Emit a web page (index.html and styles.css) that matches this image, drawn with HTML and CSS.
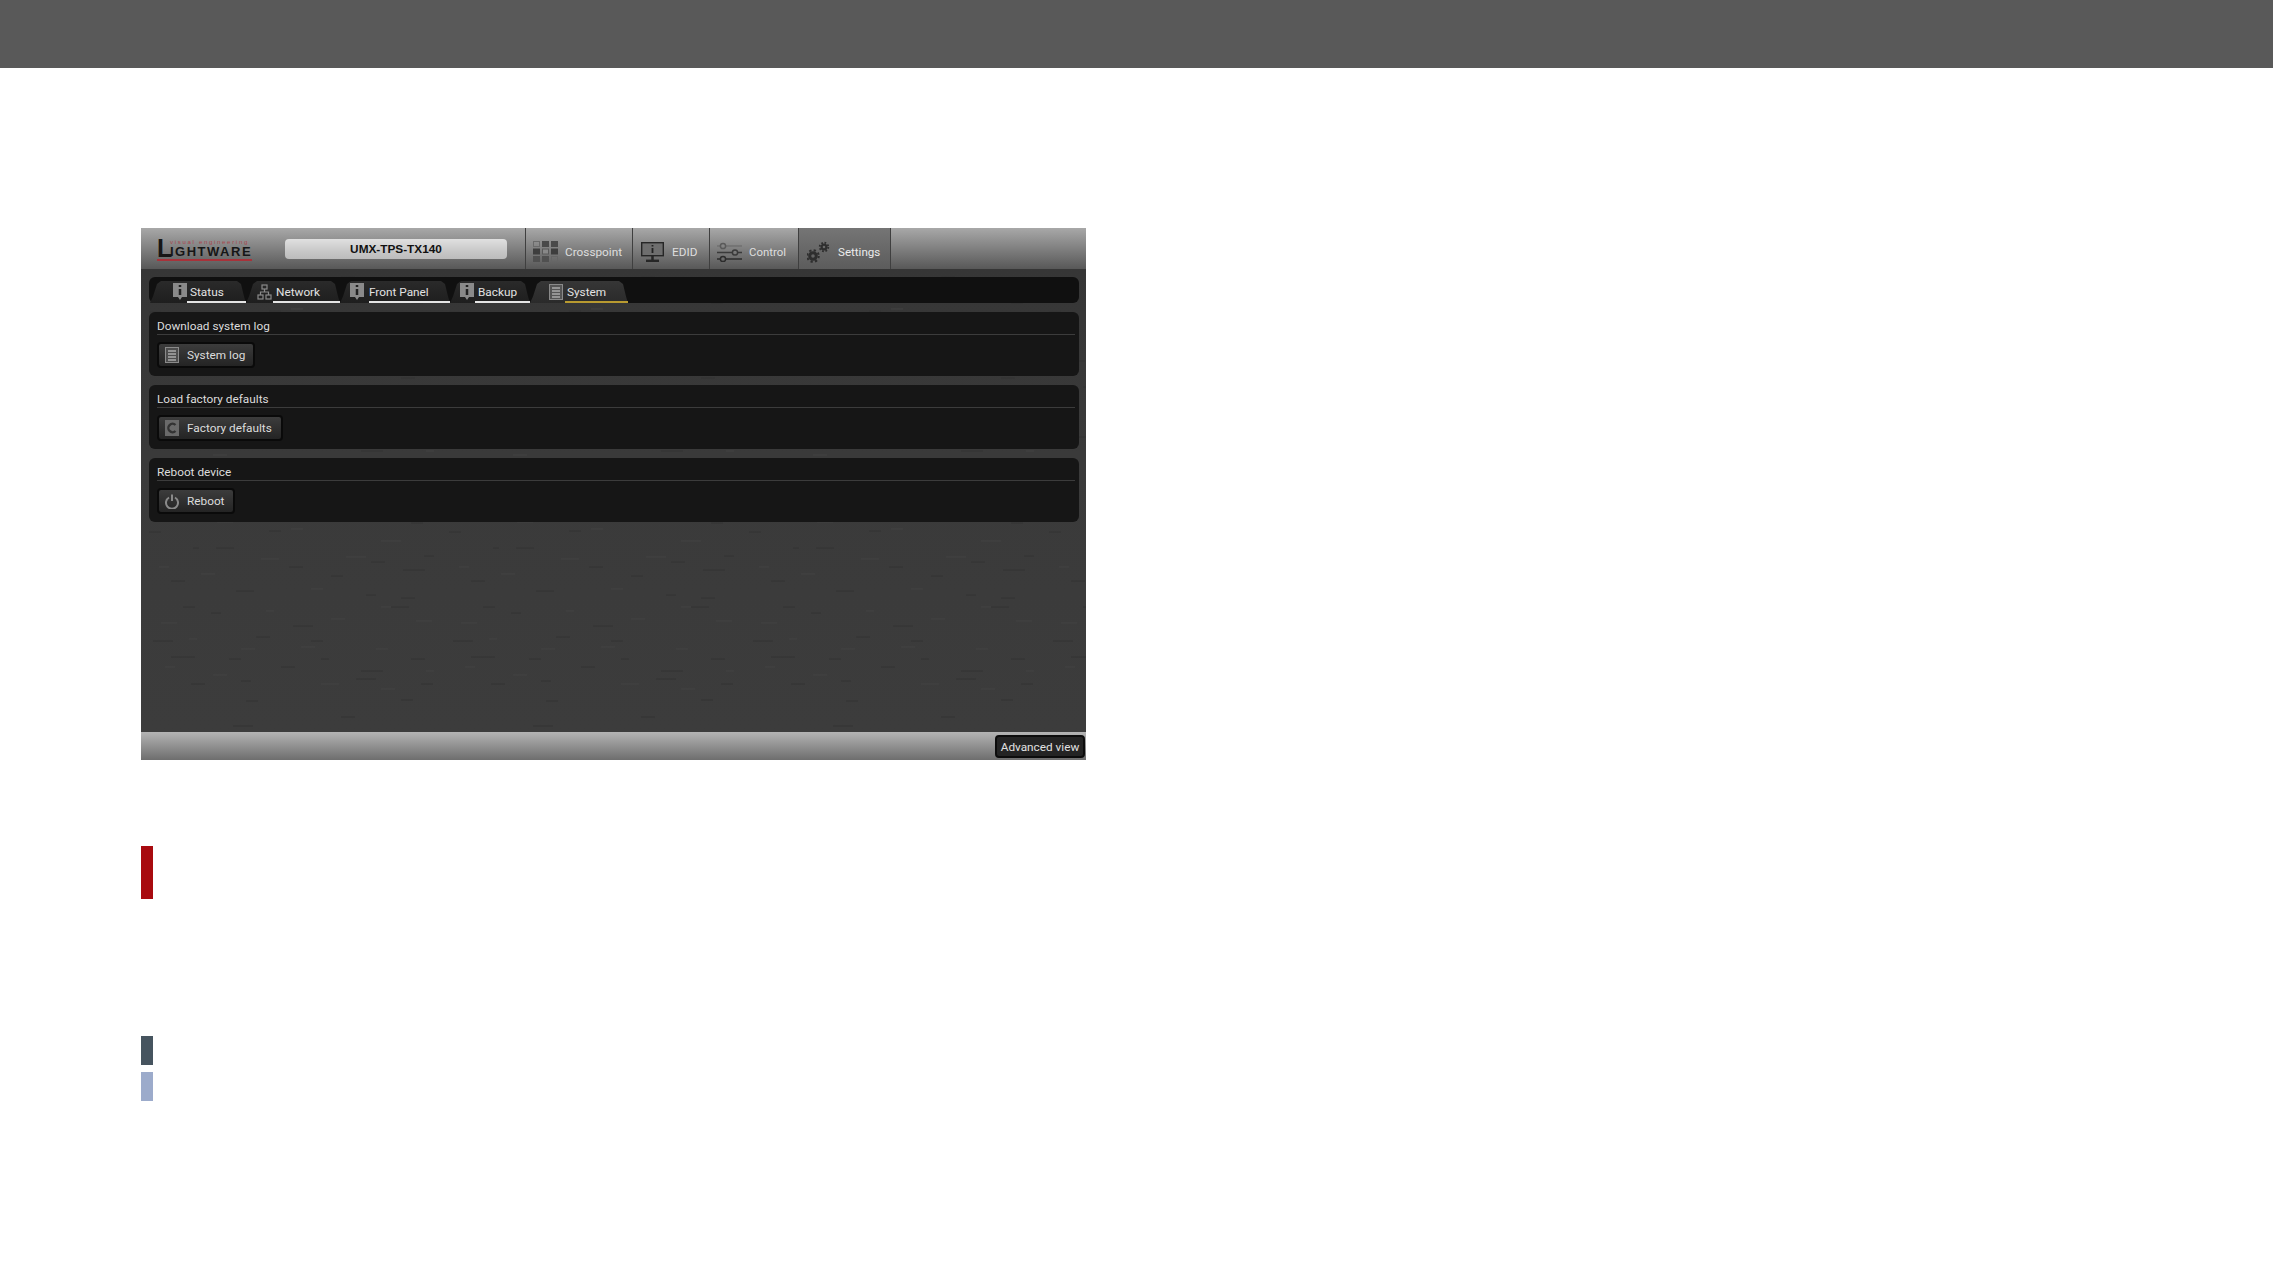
FILE: index.html
```html
<!DOCTYPE html>
<html lang="en">
<head>
  <meta charset="UTF-8" />
  <title>Lightware LDC - System</title>
  <link rel="stylesheet" href="styles.css">
</head>
<body>
  <div class="pageBar"></div>

  <div class="app">
    <div class="header">
      <div class="logo">
        <div class="logoMark">
          <span class="logoCap">L</span>
          <div class="logoRest">
            <div class="logoTag">visual engineering</div>
            <div class="logoName">IGHTWARE</div>
          </div>
        </div>
      </div>
      <div class="deviceName">UMX-TPS-TX140</div>
      <div class="nav">
        <div class="navItem navCross">
          <svg width="25" height="21" viewBox="0 0 25 21" fill="#4a4a4a">
            <rect x="0.500" y="0.500" width="6" height="5" fill="none" stroke="#6a6a6a"/><rect x="9" y="0" width="7" height="6"/><rect x="18" y="0" width="7" height="6"/>
            <rect x="0" y="7.500" width="7" height="6" fill="#3e3e3e"/><rect x="9.500" y="8" width="6" height="5" fill="#888" stroke="#5a5a5a"/><rect x="18" y="7.500" width="7" height="6" fill="#3e3e3e"/>
            <rect x="0" y="15" width="7" height="6" fill="#505050"/><rect x="9" y="15" width="7" height="6" fill="#505050"/><rect x="18.500" y="15.500" width="6" height="5" fill="none" stroke="#666"/>
          </svg>
          <span>Crosspoint</span>
        </div>
        <div class="navItem navEdid">
          <svg width="23" height="20" viewBox="0 0 23 20" fill="none">
            <rect x="0.700" y="0.700" width="21.600" height="13" fill="#6e6e6e" stroke="#262626" stroke-width="1.400"/>
            <path d="M11.500 14v4" stroke="#262626" stroke-width="2.500"/>
            <path d="M5 18.800h13" stroke="#262626" stroke-width="2.400"/>
            <path d="M11.500 3v1.500M11.500 6v5" stroke="#222" stroke-width="1.800"/>
          </svg>
          <span>EDID</span>
        </div>
        <div class="navItem navControl">
          <svg width="25" height="20" viewBox="0 0 25 20" fill="none" stroke-width="1.500">
            <path d="M0 4h3.500M9 4h16" stroke="#707070"/>
            <circle cx="6" cy="4" r="2.600" stroke="#5a5a5a"/>
            <path d="M0 10.500h15.500M21 10.500h4" stroke="#3a3a3a"/>
            <circle cx="18" cy="10.500" r="2.600" stroke="#3a3a3a"/>
            <path d="M0 17h3.500M9 17h16" stroke="#2c2c2c"/>
            <circle cx="6" cy="17" r="2.600" stroke="#2c2c2c"/>
          </svg>
          <span>Control</span>
        </div>
        <div class="navItem navSettings active">
          <svg width="24" height="22" viewBox="0 0 24 22" fill="none">
            <circle cx="6" cy="15" r="5.800" stroke="#2e2e2e" stroke-width="2" stroke-dasharray="2.300 2.250"/>
            <circle cx="6" cy="15" r="3.300" stroke="#2e2e2e" stroke-width="3"/>
            <circle cx="17" cy="6" r="4.300" stroke="#2e2e2e" stroke-width="1.800" stroke-dasharray="1.700 1.680"/>
            <circle cx="17" cy="6" r="2.400" stroke="#2e2e2e" stroke-width="2.200"/>
          </svg>
          <span>Settings</span>
        </div>
      </div>
    </div>

    <div class="content">
      <div class="tabs">
        <div class="tab tabStatus">
          <svg class="tabIcon" width="14" height="18" viewBox="0 0 14 18"><path d="M0 0h14v14H9l-2 3-2-3H0z" fill="#8a8a8a"/><path d="M7 2v2M7 6v6" stroke="#222" stroke-width="2.500"/></svg>
          <span class="tabLabel">Status</span>
        </div>
        <div class="tab tabNetwork">
          <svg class="tabIcon" width="15" height="16" viewBox="0 0 15 16" fill="none" stroke="#8a8a8a" stroke-width="1.200"><rect x="5" y="1" width="5" height="4"/><rect x="1" y="11" width="5" height="4"/><rect x="9" y="11" width="5" height="4"/><path d="M7.500 5v3M3.500 11V8h8v3"/></svg>
          <span class="tabLabel">Network</span>
        </div>
        <div class="tab tabFront">
          <svg class="tabIcon" width="14" height="18" viewBox="0 0 14 18"><path d="M0 0h14v14H9l-2 3-2-3H0z" fill="#8a8a8a"/><path d="M7 2v2M7 6v6" stroke="#222" stroke-width="2.500"/></svg>
          <span class="tabLabel">Front Panel</span>
        </div>
        <div class="tab tabBackup">
          <svg class="tabIcon" width="14" height="18" viewBox="0 0 14 18"><path d="M0 0h14v14H9l-2 3-2-3H0z" fill="#8a8a8a"/><path d="M7 2v2M7 6v6" stroke="#222" stroke-width="2.500"/></svg>
          <span class="tabLabel">Backup</span>
        </div>
        <div class="tab tabSystem active">
          <svg class="tabIcon" width="14" height="16" viewBox="0 0 14 16" fill="none"><rect x="0.500" y="0.500" width="13" height="15" fill="#555" stroke="#8a8a8a"/><path d="M3 4h8M3 7h8M3 10h8M3 13h8" stroke="#aaa" stroke-width="1.300"/></svg>
          <span class="tabLabel">System</span>
        </div>
      </div>

      <div class="panel panelLog">
        <div class="panelTitle">Download system log</div>
        <div class="btn">
          <svg width="14" height="16" viewBox="0 0 14 16" fill="none"><rect x="0.500" y="0.500" width="13" height="15" fill="#4d4d4d" stroke="#8a8a8a"/><path d="M3 4h8M3 7h8M3 10h8M3 13h8" stroke="#aaa" stroke-width="1.300"/></svg>
          <span>System log</span>
        </div>
      </div>

      <div class="panel panelFactory">
        <div class="panelTitle">Load factory defaults</div>
        <div class="btn">
          <svg width="14" height="16" viewBox="0 0 14 16" fill="none"><rect width="14" height="16" fill="#6a6a6a"/><path d="M10.500 5a4.200 4.200 0 1 0 0 6" stroke="#333" stroke-width="2.400"/></svg>
          <span>Factory defaults</span>
        </div>
      </div>

      <div class="panel panelReboot">
        <div class="panelTitle">Reboot device</div>
        <div class="btn">
          <svg width="14" height="15" viewBox="0 0 14 15" fill="none" stroke="#8a8a8a" stroke-width="2"><path d="M4 3.500a6 6 0 1 0 6 0"/><path d="M7 0.500v6.500"/></svg>
          <span>Reboot</span>
        </div>
      </div>
    </div>

    <div class="footer">
      <div class="advBtn">Advanced view</div>
    </div>
  </div>

  <div class="marker markerRed"></div>
  <div class="marker markerSlate"></div>
  <div class="marker markerBlue"></div>
</body>
</html>
```

FILE: styles.css
```css
body {
  margin: 0;
  background: #fff;
  font-family: Roboto, "Liberation Sans", sans-serif;
  height: 1276px;
  overflow: hidden;
}

.pageBar {
  height: 68px;
  background: #595959;
}

.app {
  width: 945px;
  height: 532px;
  margin: 160px 0 0 141px;
  display: flex;
  flex-direction: column;
}

.header {
  height: 41px;
  display: flex;
  align-items: stretch;
  background: linear-gradient(#a8a8a8, #8c8c8c 35%, #585858 100%);
}

.logo {
  width: 144px;
  box-sizing: border-box;
  padding: 9px 0 0 16px;
}

.logoMark {
  display: flex;
  align-items: flex-end;
  width: 95px;
  height: 20px;
  padding-bottom: 2px;
  border-bottom: 2px solid #a8323a;
  color: #161616;
  font-family: "Liberation Sans", sans-serif;
  font-weight: bold;
  white-space: nowrap;
}

.logoCap {
  width: 13px;
  font-size: 25px;
  line-height: 18px;
}

.logoRest {
  display: flex;
  flex-direction: column;
}

.logoTag {
  color: #a8464e;
  font-size: 6px;
  font-weight: normal;
  line-height: 7px;
  letter-spacing: 1.700px;
}

.logoName {
  font-size: 13px;
  line-height: 11px;
  letter-spacing: 1.500px;
}

.deviceName {
  width: 222px;
  height: 20px;
  margin-top: 11px;
  border-radius: 4px;
  background: linear-gradient(#e0e0e0, #c8c8c8 60%, #bcbcbc);
  color: #111;
  font: bold 11.800px/20px "Liberation Sans", sans-serif;
  text-align: center;
}

.nav {
  display: flex;
  margin-left: 18px;
  border-left: 1px solid #3f3f3f;
}

.navItem {
  display: flex;
  align-items: center;
  gap: 7px;
  box-sizing: border-box;
  padding: 6px 0 0 7px;
  border-right: 1px solid #3f3f3f;
  color: #dedede;
  font-size: 11.800px;
}

.navCross { width: 107px; }
.navEdid { width: 77px; padding-left: 8px; gap: 8px; }
.navControl { width: 89px; }
.navSettings { width: 92px; padding-left: 8px; }

.navControl span { font-size: 11.400px; }
.navSettings span { font-size: 11.600px; }

.navItem.active {
  background: linear-gradient(#757575, #5c5c5c);
  color: #ececec;
}

.content {
  flex: 1;
  box-sizing: border-box;
  padding: 8px 5px 0 8px;
  background-color: #3a3a3a;
  background-image:
    url("data:image/svg+xml,%3Csvg xmlns='http://www.w3.org/2000/svg' width='300' height='220' fill='none'%3E%3Cpath stroke='%23323232' d='M92 17h20M200 8h14M8 43h12M75 59h18M128 42h12M210 32h16M270 34h12M52 59h6M230 73h14M283 67h10M30 92h14M95 102h18M148 78h14M262 81h22M190 87h12M42 118h12M152 137h20M225 106h10M260 109h14M70 124h10M12 152h20M115 148h14M170 152h12M250 118h18M30 168h24M88 170h12M140 178h14M220 182h22M270 170h14M50 195h14M100 192h10M180 170h8M215 190h20M280 195h12M105 212h12M260 211h12'/%3E%3Cpath stroke='%23424242' d='M76 33h16M150 40h12M240 52h20M18 78h10M120 70h18M205 68h20M60 85h14M170 100h12M240 118h10M20 134h16M125 122h8M190 130h14M275 132h16M48 150h8M100 160h14M160 158h14M235 160h12M24 178h10M72 186h14M180 195h18M240 200h14M285 182h8'/%3E%3C/svg%3E"),
    linear-gradient(#363636, #3a3a3a 40%, #3c3c3c);
}

.tabs {
  height: 26px;
  display: flex;
  align-items: flex-end;
  padding-left: 1px;
  margin: 0 2px 9px 0;
  background: #101010;
  border-radius: 6px;
}

.tab {
  position: relative;
  display: flex;
  align-items: flex-end;
  height: 22px;
  color: #e2e2e2;
  font-size: 11.800px;
}

.tab::before {
  content: "";
  position: absolute;
  top: 0;
  bottom: 0;
  left: 0;
  right: 0;
  background: linear-gradient(#2a2a2a, #1e1e1e);
  clip-path: polygon(0 100%, 3px 70%, 7px 3px, 11px 0, calc(100% - 9px) 0, calc(100% - 5px) 3px, calc(100% - 2px) 70%, 100% 100%);
}

.tab.active::before {
  background: linear-gradient(#363636, #2a2a2a);
}

.tabIcon {
  position: relative;
  align-self: center;
}

.tabLabel {
  position: relative;
  box-sizing: border-box;
  height: 22px;
  padding: 2px 0 0 3px;
  line-height: 18px;
  border-bottom: 2px solid #e4e4e4;
  white-space: nowrap;
}

.tab.active .tabLabel {
  border-bottom-color: #b89a30;
}

.tabStatus { padding-left: 23px; }
.tabStatus .tabLabel { width: 59px; }

.tabNetwork { padding-left: 11px; }
.tabNetwork .tabLabel { width: 67px; margin-left: 1px; }

.tabFront { padding-left: 10px; }
.tabFront .tabLabel { width: 81px; margin-left: 5px; padding-left: 0; }

.tabBackup { padding-left: 10px; }
.tabBackup .tabLabel { width: 55px; margin-left: 1px; }

.tabSystem { padding-left: 19px; }
.tabSystem .tabLabel { width: 63px; margin-left: 2px; padding-left: 2px; }

.panel {
  box-sizing: border-box;
  height: 64px;
  padding: 0 4px 0 8px;
  margin: 0 2px 9px 0;
  background: #161616;
  border-radius: 6px;
}

.panelTitle {
  height: 22px;
  border-bottom: 1px solid #3c3c3c;
  color: #dcdcdc;
  font-size: 11.800px;
  line-height: 28px;
}

.btn {
  display: inline-flex;
  align-items: center;
  gap: 8px;
  box-sizing: border-box;
  height: 26px;
  margin-top: 7px;
  padding-left: 6px;
  border: 2px solid #0a0a0a;
  border-radius: 4px;
  background: linear-gradient(#3c3c3c, #242424);
  color: #dcdcdc;
  font-size: 11.800px;
  white-space: nowrap;
}

.panelLog .btn { width: 98px; }
.panelFactory .btn { width: 126px; }
.panelReboot .btn { width: 78px; }

.footer {
  height: 28px;
  display: flex;
  justify-content: flex-end;
  align-items: center;
  padding-right: 1px;
  background: linear-gradient(#b4b4b4, #6e6e6e);
}

.advBtn {
  box-sizing: border-box;
  width: 90px;
  height: 23px;
  border: 2px solid #0c0c0c;
  border-radius: 4px;
  background: #242424;
  color: #e0e0e0;
  font-size: 11.800px;
  line-height: 20px;
  text-align: center;
}

.marker {
  width: 12px;
  margin-left: 141px;
}

.markerRed {
  height: 53px;
  margin-top: 86px;
  background: #a80a0f;
}

.markerSlate {
  height: 29px;
  margin-top: 137px;
  background: #46545f;
}

.markerBlue {
  height: 29px;
  margin-top: 7px;
  background: #9cabcb;
}
```
